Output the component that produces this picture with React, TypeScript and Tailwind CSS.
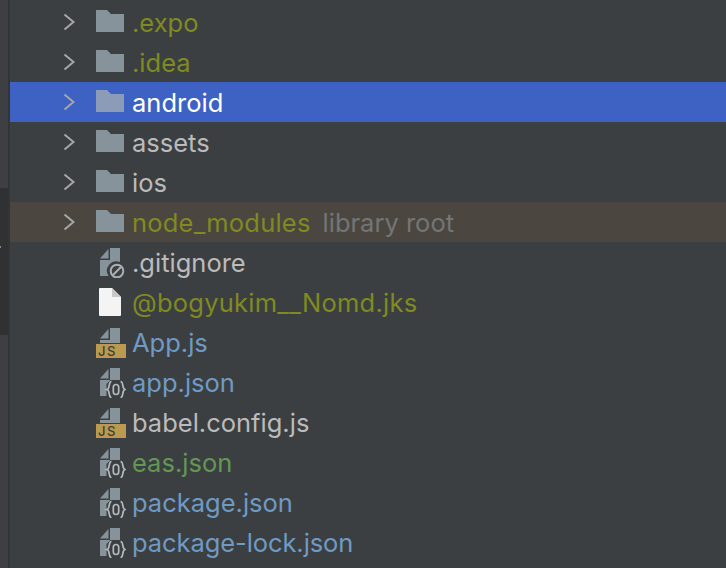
import type { ReactNode } from "react";

const OLIVE = "text-[#808a20]";
const BLUE = "text-[#6f9ac4]";
const GRAY = "text-[#bbbbbb]";
const GREEN = "text-[#629755]";

function Chevron() {
  return (
    <svg width="12" height="18" viewBox="0 0 12 18" fill="none" className="mb-[1px] text-[#a5a7a9]">
      <path d="M1.500 1.500 L10.500 9 L1.500 16.500" stroke="currentColor" strokeWidth="2" />
    </svg>
  );
}

function Folder({ selected }: { selected?: boolean }) {
  return (
    <svg
      width="28"
      height="22"
      viewBox="0 0 28 22"
      className={`mb-[2px] ${selected ? "fill-[#8b9bb8]" : "fill-[#87939a]"}`}
    >
      <path d="M0 0 H11 L15 4 H28 V22 H0 Z" />
    </svg>
  );
}

function JsIcon() {
  return (
    <div className="mt-[2px] flex h-[30px] w-[30px] flex-col justify-between">
      <svg width="30" height="15" viewBox="0 0 30 15">
        <path className="fill-[#87939a]" d="M4 10.500 L12.500 1 V10.500 Z M14 0 H24 V15 H4 V12 H14 Z" />
      </svg>
      <div className="flex h-[14px] w-[30px] items-center bg-[#b99a4f] pl-[2px] text-[13px] leading-none font-medium tracking-[1.500px] text-[#3c3f41]">
        JS
      </div>
    </div>
  );
}

function JsonIcon() {
  return (
    <svg width="30" height="31" viewBox="0 0 30 31" fill="none" className="mt-[1px]">
      {/* page cut away round the braces */}
      <path
        className="fill-[#87939a]"
        d="M4 11.500 L12.500 2 V11.500 Z M14 1 H24 V13 H14.500 L10.500 17 V29 H4 V13 H14 Z"
      />
      <g className="stroke-[#b2babf]" strokeWidth="1.700">
        <path d="M15.500 14.500 C12 14.500 14.500 21.500 11 22.500 C14.500 23.500 12 30.500 15.500 30.500" />
        <path d="M24.500 14.500 C28 14.500 25.500 21.500 29 22.500 C25.500 23.500 28 30.500 24.500 30.500" />
        <rect x="17.300" y="17.500" width="5.400" height="10" rx="2.700" />
      </g>
    </svg>
  );
}

function IgnoreIcon() {
  return (
    <svg width="30" height="31" viewBox="0 0 30 31" fill="none" className="mt-[1px]">
      <path
        className="fill-[#87939a]"
        d="M4 11.500 L12.500 2 V11.500 Z M14 1 H24 V15 A9.500 9.500 0 0 0 12.500 29 H4 V13 H14 Z"
      />
      <circle cx="21" cy="24" r="6.300" className="stroke-[#a8b0b5]" strokeWidth="2" />
      <path d="M17 28 L25 20" className="stroke-[#a8b0b5]" strokeWidth="2" />
    </svg>
  );
}

function PlainIcon() {
  return (
    <svg width="22" height="28" viewBox="0 0 22 28" className="ml-[3px]">
      <path
        d="M1 0 H13 L22 9 V27 A1 1 0 0 1 21 28 H1 A1 1 0 0 1 0 27 V1 A1 1 0 0 1 1 0 Z"
        fill="#f4f4f4"
      />
      <path d="M13 0 V9 H22 Z" fill="#c9c9c9" />
    </svg>
  );
}

type RowProps = {
  icon: ReactNode;
  label: string;
  color: string;
  expandable?: boolean;
  note?: string;
  bg?: string;
  tracking?: string;
};

function Row({ icon, label, color, expandable, note, bg, tracking }: RowProps) {
  return (
    <div className={`flex h-10 items-center ${bg ?? ""}`}>
      <div className="flex w-[65px] justify-end">{expandable && <Chevron />}</div>
      <div className="flex w-[57px] justify-start pl-[21px]">{icon}</div>
      <span className={`pt-[2px] text-[25.500px] leading-none whitespace-nowrap ${color} ${tracking ?? ""}`}>
        {label}
      </span>
      {note && <span className="ml-3 pt-[2px] text-[25.500px] leading-none text-[#737577]">{note}</span>}
    </div>
  );
}

export default function App() {
  return (
    <div className="relative flex h-[568px] w-[726px] overflow-hidden bg-[#3c3f41] font-['Inter',sans-serif]">
      {/* left gutter */}
      <div className="flex w-[10px] flex-none flex-col border-r-2 border-[#323436] bg-[#3d3f42]">
        <div className="h-[188px]" />
        <div className="h-[147px] bg-[#2f3133]" />
      </div>
      <div className="absolute top-[246px] left-0 h-[2px] w-[1px] bg-[#8a8a8a]" />
      <div className="flex-1 pt-[2px]">
        <Row expandable icon={<Folder />} label=".expo" color={OLIVE} />
        <Row expandable icon={<Folder />} label=".idea" color={OLIVE} />
        <Row expandable icon={<Folder selected />} label="android" color="text-white" bg="bg-[#3d62c4]" />
        <Row expandable icon={<Folder />} label="assets" color={GRAY} />
        <Row expandable icon={<Folder />} label="ios" color={GRAY} />
        <Row
          expandable
          icon={<Folder />}
          label="node_modules"
          color={OLIVE}
          note="library root"
          bg="bg-[#4b4740]"
          tracking="tracking-[0.200px]"
        />
        <Row icon={<IgnoreIcon />} label=".gitignore" color={GRAY} />
        <Row icon={<PlainIcon />} label="@bogyukim__Nomd.jks" color={OLIVE} tracking="tracking-[0.250px]" />
        <Row icon={<JsIcon />} label="App.js" color={BLUE} />
        <Row icon={<JsonIcon />} label="app.json" color={BLUE} />
        <Row icon={<JsIcon />} label="babel.config.js" color={GRAY} />
        <Row icon={<JsonIcon />} label="eas.json" color={GREEN} />
        <Row icon={<JsonIcon />} label="package.json" color={BLUE} />
        <Row icon={<JsonIcon />} label="package-lock.json" color={BLUE} tracking="tracking-[-0.080px]" />
      </div>
    </div>
  );
}
